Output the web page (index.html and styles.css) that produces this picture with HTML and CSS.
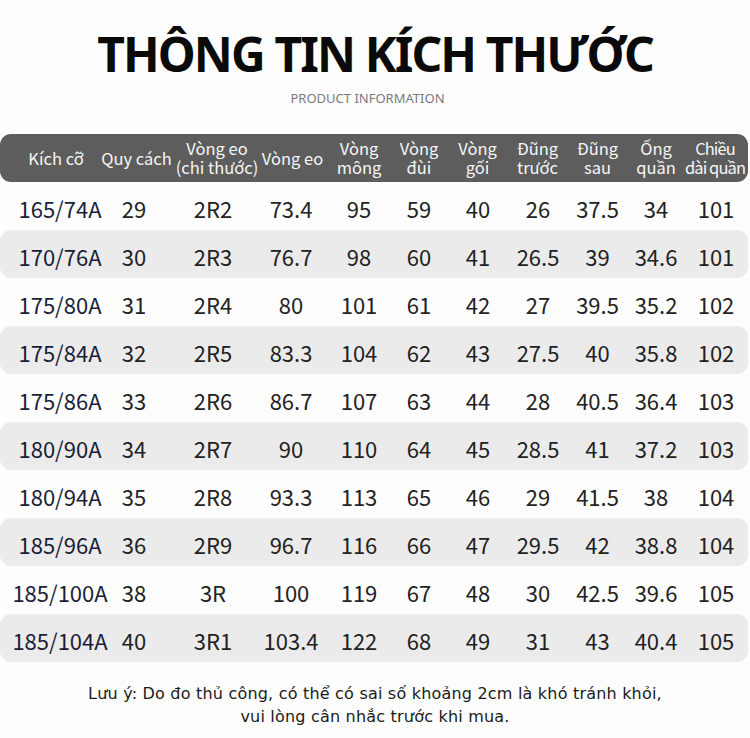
FILE: index.html
```html
<!DOCTYPE html>
<html lang="vi">
<head>
<meta charset="utf-8">
<title>Thông tin kích thước</title>
<link rel="stylesheet" href="styles.css">
</head>
<body>
<div class="page">
  <h1 class="title">THÔNG TIN KÍCH THƯỚC</h1>
  <div class="subtitle">PRODUCT INFORMATION</div>
  <div class="table">
    <div class="row head">
      <div class="cell">Kích cỡ</div>
      <div class="cell">Quy cách</div>
      <div class="cell">Vòng eo<br>(chi thước)</div>
      <div class="cell">Vòng eo</div>
      <div class="cell">Vòng<br>mông</div>
      <div class="cell">Vòng<br>đùi</div>
      <div class="cell">Vòng<br>gối</div>
      <div class="cell">Đũng<br>trước</div>
      <div class="cell">Đũng<br>sau</div>
      <div class="cell">Ống<br>quần</div>
      <div class="cell tight">Chiều<br>dài quần</div>
    </div>
    <div class="row"><div class="cell size">165/74A</div><div class="cell">29</div><div class="cell">2R2</div><div class="cell">73.4</div><div class="cell">95</div><div class="cell">59</div><div class="cell">40</div><div class="cell">26</div><div class="cell">37.5</div><div class="cell">34</div><div class="cell">101</div></div>
    <div class="row alt"><div class="cell size">170/76A</div><div class="cell">30</div><div class="cell">2R3</div><div class="cell">76.7</div><div class="cell">98</div><div class="cell">60</div><div class="cell">41</div><div class="cell">26.5</div><div class="cell">39</div><div class="cell">34.6</div><div class="cell">101</div></div>
    <div class="row"><div class="cell size">175/80A</div><div class="cell">31</div><div class="cell">2R4</div><div class="cell">80</div><div class="cell">101</div><div class="cell">61</div><div class="cell">42</div><div class="cell">27</div><div class="cell">39.5</div><div class="cell">35.2</div><div class="cell">102</div></div>
    <div class="row alt"><div class="cell size">175/84A</div><div class="cell">32</div><div class="cell">2R5</div><div class="cell">83.3</div><div class="cell">104</div><div class="cell">62</div><div class="cell">43</div><div class="cell">27.5</div><div class="cell">40</div><div class="cell">35.8</div><div class="cell">102</div></div>
    <div class="row"><div class="cell size">175/86A</div><div class="cell">33</div><div class="cell">2R6</div><div class="cell">86.7</div><div class="cell">107</div><div class="cell">63</div><div class="cell">44</div><div class="cell">28</div><div class="cell">40.5</div><div class="cell">36.4</div><div class="cell">103</div></div>
    <div class="row alt"><div class="cell size">180/90A</div><div class="cell">34</div><div class="cell">2R7</div><div class="cell">90</div><div class="cell">110</div><div class="cell">64</div><div class="cell">45</div><div class="cell">28.5</div><div class="cell">41</div><div class="cell">37.2</div><div class="cell">103</div></div>
    <div class="row"><div class="cell size">180/94A</div><div class="cell">35</div><div class="cell">2R8</div><div class="cell">93.3</div><div class="cell">113</div><div class="cell">65</div><div class="cell">46</div><div class="cell">29</div><div class="cell">41.5</div><div class="cell">38</div><div class="cell">104</div></div>
    <div class="row alt"><div class="cell size">185/96A</div><div class="cell">36</div><div class="cell">2R9</div><div class="cell">96.7</div><div class="cell">116</div><div class="cell">66</div><div class="cell">47</div><div class="cell">29.5</div><div class="cell">42</div><div class="cell">38.8</div><div class="cell">104</div></div>
    <div class="row"><div class="cell size">185/100A</div><div class="cell">38</div><div class="cell">3R</div><div class="cell">100</div><div class="cell">119</div><div class="cell">67</div><div class="cell">48</div><div class="cell">30</div><div class="cell">42.5</div><div class="cell">39.6</div><div class="cell">105</div></div>
    <div class="row alt"><div class="cell size">185/104A</div><div class="cell">40</div><div class="cell">3R1</div><div class="cell">103.4</div><div class="cell">122</div><div class="cell">68</div><div class="cell">49</div><div class="cell">31</div><div class="cell">43</div><div class="cell">40.4</div><div class="cell">105</div></div>
  </div>
  <p class="note">Lưu ý: Do đo thủ công, có thể có sai số khoảng 2cm là khó tránh khỏi,<br>vui lòng cân nhắc trước khi mua.</p>
</div>
</body>
</html>
```

FILE: styles.css
```css
html, body {
  margin: 0;
  padding: 0;
  background: #fdfdfd;
}

.page {
  width: 750px;
  height: 738px;
  overflow: hidden;
  font-family: "Noto Sans CJK SC", "Noto Sans", sans-serif;
  color: #222;
}

.title {
  margin: 24px 0 0;
  font-family: "Noto Sans", sans-serif;
  font-weight: 700;
  font-size: 48px;
  letter-spacing: -1.9px;
  line-height: 60px;
  text-align: center;
  color: #0a0a0a;
}

.subtitle {
  margin-top: 5px;
  padding-right: 15px;
  font-family: "Noto Sans", sans-serif;
  font-size: 13px;
  line-height: 18px;
  text-align: center;
  color: #7a7a7a;
}

.table {
  margin-top: 27px;
  width: 748px;
}

.row {
  display: grid;
  grid-template-columns: 72px 76px 82px 74px 62px 58px 60px 60px 59px 58px 62px;
  padding-left: 24px;
  height: 48px;
  align-items: center;
  border-radius: 11px;
  font-size: 22px;
  color: #222;
}

.row.alt {
  background: #ebebeb;
}

.row.head {
  grid-template-columns: 80px 81px 80px 71px 62px 58px 59px 61px 59px 58px 62px;
  padding-left: 16px;
  background: #5d5d5d;
  color: #f6f6f6;
  font-size: 16.5px;
  line-height: 19px;
}

.cell {
  display: flex;
  justify-content: center;
  text-align: center;
  white-space: nowrap;
  padding-top: 4px;
}

.row.head .cell {
  padding-top: 0;
}

.row.head .cell.tight {
  letter-spacing: -0.9px;
  padding-right: 2px;
}

.cell.size {
  color: #1b1d38;
}

.note {
  margin: 20px 0 0;
  font-family: "DejaVu Sans", sans-serif;
  font-size: 16px;
  letter-spacing: 0.2px;
  line-height: 23px;
  text-align: center;
  color: #1a1a1a;
}
```
